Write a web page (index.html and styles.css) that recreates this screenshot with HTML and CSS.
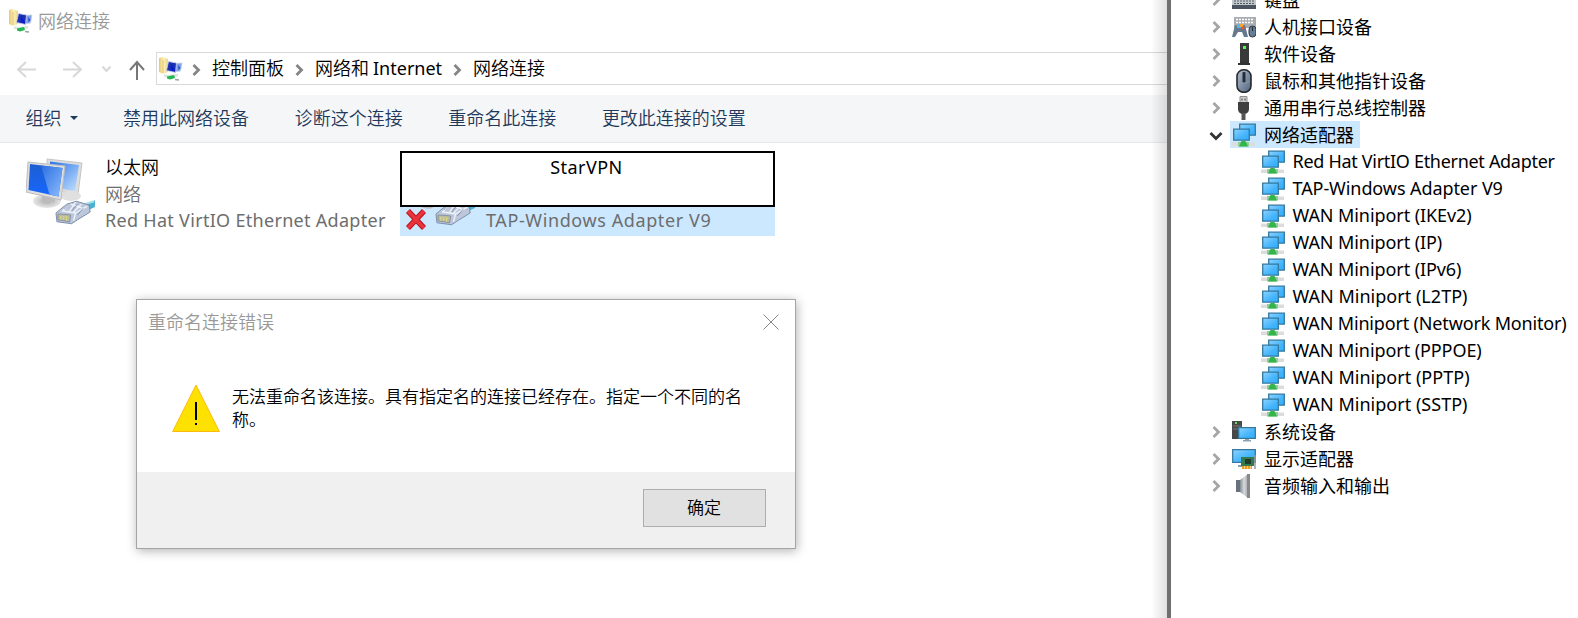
FILE: index.html
```
<!DOCTYPE html>
<html lang="zh-CN">
<head>
<meta charset="utf-8">
<title>网络连接</title>
<link rel="stylesheet" href="styles.css">
</head>
<body>
<svg class="defs" width="0" height="0">
  <defs>
    <linearGradient id="sky" x1="0" y1="0" x2="1" y2="1"><stop offset="0" stop-color="#8dd3ff"/><stop offset=".6" stop-color="#45b5fd"/><stop offset="1" stop-color="#2eaefc"/></linearGradient>
    <linearGradient id="screen" x1="0" y1="0" x2="0" y2="1"><stop offset="0" stop-color="#1d5fd0"/><stop offset="1" stop-color="#1766ff"/></linearGradient>
    <linearGradient id="glare" x1="0" y1="0" x2="1" y2="1"><stop offset="0" stop-color="#2a6fe0"/><stop offset="1" stop-color="#8ebcff"/></linearGradient>
    <linearGradient id="screenBack" x1="0" y1="0" x2="1" y2="1"><stop offset="0" stop-color="#2a72e6"/><stop offset="1" stop-color="#c5e2ff"/></linearGradient>
    <linearGradient id="folder" x1="0" y1="0" x2="1" y2="0"><stop offset="0" stop-color="#e3c671"/><stop offset=".5" stop-color="#fff2b8"/><stop offset="1" stop-color="#e8d491"/></linearGradient>
    <linearGradient id="metal" x1="0" y1="0" x2="1" y2="0"><stop offset="0" stop-color="#858c92"/><stop offset=".5" stop-color="#d6d9dc"/><stop offset="1" stop-color="#a7a9ac"/></linearGradient>
    <linearGradient id="mouse" x1="0" y1="0" x2="1" y2="1"><stop offset="0" stop-color="#b3bfce"/><stop offset="1" stop-color="#50647e"/></linearGradient>
    <radialGradient id="stand"><stop offset="0" stop-color="#aaa"/><stop offset="1" stop-color="#e7e7e7"/></radialGradient>
    <symbol id="net" viewBox="0 0 24 24">
      <path d="M0 19.500h23v3.500H0z" fill="#dcdcdc"/><path d="M6 19h11v4.500H6z" fill="#8fd096"/><path d="M9.500 18h4l2.500 5.500H7z" fill="#36b44c"/>
      <path d="M7.700 1.200h15.600v11H7.700z" fill="url(#sky)" stroke="#35789f" stroke-width="1.300"/>
      <path d="M1.700 6.200h15.600v11H1.700z" fill="url(#sky)" stroke="#35789f" stroke-width="1.300"/>
    </symbol>
    <symbol id="folderNet" viewBox="0 0 24 24">
      <path d="M0 1 4 0l5 2v13l-5 2-4-2z" fill="url(#folder)"/><path d="M4 3v13" stroke="#dcc177"/>
      <path d="m15 6.500 8-.5-1.500 8-6.500 1z" fill="#7f9ee6" stroke="#c3d0ee" stroke-width=".8"/>
      <path d="m9.500 4.500 8 1.500-1 9.500-9-2z" fill="#1a2fb4" stroke="#cfd6e8" stroke-width=".8"/><path d="m12 7 4.500 7h-4z" fill="#0c1ad0"/><path d="m19 8 2.500 3-2 2z" fill="#2b4bd2"/>
      <path d="m5 18.500 5 1 9-1.500" fill="none" stroke="#dbe4de" stroke-width="2.500"/><path d="m8 19.500 7-1.500 1 3-5 1.500-3-1z" fill="#22b950"/><path d="m16 22.500 4 .5" stroke="#98a39d" stroke-width="1.500"/>
    </symbol>
    <symbol id="plug" viewBox="0 0 42 26">
      <path d="m27 6 14-5v7l-9 4z" fill="#4eb0cf"/><path d="m30 5 10-3" stroke="#a9e2ef" stroke-width="2"/>
      <path d="m1 14 11-9 10-3 13 4 1 7-13 8-6 4-15-2z" fill="#bcc7db" stroke="#7c8ca8"/>
      <path d="m12 6-4 6 13 2 12-7M16 5l12 4M21 3l-6 9M27 5l-8 8M21 14l-2 8" fill="none" stroke="#eff4fb" stroke-width="1.400"/>
      <path d="m12 6-3 4m14-5-6 7m12-3-6 7" stroke="#7787a4" stroke-width=".8"/>
      <path d="m3 15 13 1-1 7-12-2z" fill="#b9bca0" stroke="#8690a0"/><path d="M6 17v4m3-4v4m3-4v5" stroke="#e3de78"/>
    </symbol>
    <symbol id="chev" viewBox="0 0 10 14"><path d="m1.500 2 5 5-5 5" fill="none" stroke="currentColor" stroke-width="2.800"/></symbol>
  </defs>
</svg>
<div class="desktop">
  <main class="window">
    <header class="titlebar"><svg class="i24"><use href="#folderNet"/></svg><span>网络连接</span></header>
    <nav class="navbar">
      <svg class="arrows" viewBox="0 0 156 33" fill="none">
        <g stroke="#d8d8d8" stroke-width="2"><path d="M36 17.500H18m8-7.500-8 7.500 8 7.500M63 17.500h18m-8-7.500 8 7.500-8 7.500"/><path d="m102.500 14.500 4 4.500 4-4.500"/></g>
        <path d="M137 28V10m-7 8 7-8 7 8" stroke="#777" stroke-width="2"/>
      </svg>
      <div class="address">
        <svg class="i24"><use href="#folderNet"/></svg>
        <svg class="sep"><use href="#chev"/></svg><span class="crumb">控制面板</span>
        <svg class="sep"><use href="#chev"/></svg><span class="crumb">网络和 <span class="lat">Internet</span></span>
        <svg class="sep"><use href="#chev"/></svg><span class="crumb">网络连接</span>
      </div>
    </nav>
    <div class="commands">
      <span class="organize">组织<i class="caret"></i></span><span>禁用此网络设备</span><span>诊断这个连接</span><span>重命名此连接</span><span>更改此连接的设置</span>
    </div>
    <section class="files">
      <article class="conn">
        <svg class="big" viewBox="0 0 72 72">
          <path d="m21 1 35 4-4 31-30-4z" fill="#ddd" stroke="#c5c5c5"/><path d="m24 3.500 29 3.500-4 26-24-4z" fill="url(#screenBack)"/>
          <ellipse cx="45" cy="38" rx="10" ry="5" fill="#e0e0e0"/>
          <ellipse cx="21" cy="43" rx="14" ry="7" fill="url(#stand)"/><path d="m16 34 11 2 2 8H16z" fill="#bbb"/>
          <path d="m2 4 37 4-4 34L0 34z" fill="#dedede" stroke="#bdbdbd"/><path d="m4 6 32.500 4-4 28.500L2.500 32z" fill="url(#screen)"/><path d="m15 7.500 21.500 2.500-4 28.500-9-2z" fill="url(#glare)"/>
          <use href="#plug" x="29" y="41" width="41" height="26"/>
        </svg>
        <div class="info"><span class="name">以太网</span><span>网络</span><span class="lat wide">Red Hat VirtIO Ethernet Adapter</span></div>
      </article>
      <article class="renaming">
        <div class="edit lat">StarVPN</div>
        <div class="selected">
          <svg class="status" viewBox="0 0 80 29">
            <path d="M21 0h13q-4 3-10 1z" fill="#bbb"/>
            <use href="#plug" x="35" y="-7" width="41" height="26"/>
            <path d="M8 4 24 21M24 4 8 21" stroke="#b9131e" stroke-width="5.500"/><path d="M8 4 24 21M24 4 8 21" stroke="#e9343c" stroke-width="3.500"/>
          </svg>
          <span class="lat wider">TAP-Windows Adapter V9</span>
        </div>
      </article>
    </section>
    <div class="dialog">
      <div class="dtitle"><span>重命名连接错误</span><svg class="close" viewBox="0 0 16 16"><path d="m.5.500 15 15m0-15-15 15" stroke="#888" fill="none"/></svg></div>
      <div class="dbody">
        <svg class="warn" viewBox="0 0 48 48"><path d="M24 1 47.300 47.500H.7z" fill="#fde100" stroke="#ffb90c"/><path d="M24 18v18m0 3v2" stroke="#000" stroke-width="2"/></svg>
        <p>无法重命名该连接。具有指定名的连接已经存在。指定一个不同的名称。</p>
      </div>
      <div class="dfoot"><button class="ok">确定</button></div>
    </div>
  </main>
  <aside class="devices">
    <ul class="tree">
      <li><svg class="tw"><use href="#chev"/></svg><svg class="i24" viewBox="0 0 24 24"><path d="M0 8h24v11H0z" fill="#c3c8cc"/><path d="M2 10h20M2 13h20M2 15.500h20" stroke="#545d66" stroke-dasharray="2 1"/><path d="M0 17h24v4H0z" fill="#49545e"/></svg><span>键盘</span></li>
      <li><svg class="tw"><use href="#chev"/></svg><svg class="i24" viewBox="0 0 24 24"><path d="M2 2h22v11H2z" fill="#a9aeb2"/><path d="M4 4.500h18M4 7.500h18" stroke="#fff" stroke-width="1.500" stroke-dasharray="2 1"/><path d="M3 10q5 2 10 0l3 12h-4l-2-5H6l-3 5H0z" fill="#65788d"/><path d="M5 9h4v4H5z" fill="#53b8ef"/><path d="M8 9h3v3H8z" fill="#f7a52b"/><circle cx="11" cy="13" r="1.500" fill="#ee5339"/><rect x="17" y="11" width="7" height="11" rx="3.500" fill="#657d98" stroke="#303942"/><path d="M20.500 12v4" stroke="#242b31"/></svg><span>人机接口设备</span></li>
      <li><svg class="tw"><use href="#chev"/></svg><svg class="i24" viewBox="0 0 24 24"><path d="M8 1h9v19H8z" fill="#393939"/><path d="M11 4h3v3h-3z" fill="#4bff45"/><path d="M8 20h9v1h1v2H6v-2h2z" fill="#333"/></svg><span>软件设备</span></li>
      <li><svg class="tw"><use href="#chev"/></svg><svg class="i24" viewBox="0 0 24 24"><rect x="5" y=".8" width="14" height="22.500" rx="6.500" fill="url(#mouse)" stroke="#25292d" stroke-width="1.600"/><rect x="10.500" y="3" width="3" height="11" rx="1" fill="#252e38"/><path d="M6.500 12q5.500 4 11 0" fill="none" stroke="#8999ad"/></svg><span>鼠标和其他指针设备</span></li>
      <li><svg class="tw"><use href="#chev"/></svg><svg class="i24" viewBox="0 0 24 24"><path d="M8 .5h7V7H8z" fill="#ccc" stroke="#8e8e8e"/><path d="M9.500 2.500h1v2h-1zm3 0h1v2h-1z" fill="#444"/><path d="M6 6h11v7q0 4-4 5H10q-4-1-4-5z" fill="#404040"/><path d="M9.500 17h4v7h-4z" fill="#555"/></svg><span>通用串行总线控制器</span></li>
      <li class="open"><svg class="down" viewBox="0 0 14 10"><path d="m1.500 2 5.500 5.500L12.500 2" fill="none" stroke="#333" stroke-width="2.800"/></svg><div class="hl"><svg class="i24"><use href="#net"/></svg><span>网络适配器</span></div></li>
      <li class="child tight"><svg class="i24"><use href="#net"/></svg><span>Red Hat VirtIO Ethernet Adapter</span></li>
      <li class="child"><svg class="i24"><use href="#net"/></svg><span>TAP-Windows Adapter V9</span></li>
      <li class="child"><svg class="i24"><use href="#net"/></svg><span>WAN Miniport (IKEv2)</span></li>
      <li class="child"><svg class="i24"><use href="#net"/></svg><span>WAN Miniport (IP)</span></li>
      <li class="child"><svg class="i24"><use href="#net"/></svg><span>WAN Miniport (IPv6)</span></li>
      <li class="child loose"><svg class="i24"><use href="#net"/></svg><span>WAN Miniport (L2TP)</span></li>
      <li class="child medium"><svg class="i24"><use href="#net"/></svg><span>WAN Miniport (Network Monitor)</span></li>
      <li class="child"><svg class="i24"><use href="#net"/></svg><span>WAN Miniport (PPPOE)</span></li>
      <li class="child loose"><svg class="i24"><use href="#net"/></svg><span>WAN Miniport (PPTP)</span></li>
      <li class="child loose"><svg class="i24"><use href="#net"/></svg><span>WAN Miniport (SSTP)</span></li>
      <li><svg class="tw"><use href="#chev"/></svg><svg class="i24" viewBox="0 0 24 24"><path d="M0 1h10v18H0z" fill="#484848"/><path d="M1 6h8M1 9h8" stroke="#777"/><path d="M3 2h2v2H3z" fill="#5ee35a"/><path d="M6.700 7.700h16.600v10.600H6.700z" fill="url(#sky)" stroke="#35789f" stroke-width="1.300"/><path d="M13 19h4v1h2v1.500h-8V20h2z" fill="#8ba1b1"/></svg><span>系统设备</span></li>
      <li><svg class="tw"><use href="#chev"/></svg><svg class="i24" viewBox="0 0 24 24"><path d="M.7 2.700h22.600v12.600H.7z" fill="url(#sky)" stroke="#35789f" stroke-width="1.300"/><path d="M6 19h6" stroke="#8ba1b1" stroke-width="2"/><path d="M9 10h13v9H9z" fill="#347a4f"/><path d="M13 12h6v5h-6z" fill="#213b2e"/><path d="M10 20.500h10" stroke="#ef9c1b" stroke-width="3" stroke-dasharray="2.500 .5"/><path d="M23 8v14" stroke="#999" stroke-width="1.500"/></svg><span>显示适配器</span></li>
      <li><svg class="tw"><use href="#chev"/></svg><svg class="i24" viewBox="0 0 24 24"><path d="M4 6h6v12H4z" fill="#68727c"/><path d="M8 6 16 0v24l-8-6z" fill="url(#metal)"/><path d="M15 0h3v24h-3z" fill="#888"/></svg><span>音频输入和输出</span></li>
    </ul>
  </aside>
</div>
</body>
</html>
```
FILE: styles.css
```
* { box-sizing: border-box; }
body { margin: 0; overflow: hidden; background: #fff; color: #000; font: 350 18px/27px "Noto Sans", "Noto Sans CJK SC", sans-serif; }
span, p, button { font-family: "Noto Sans CJK SC", sans-serif; white-space: nowrap; }
svg { display: block; flex: none; }
.defs { position: absolute; }
.i24 { width: 24px; height: 24px; }
.desktop { display: flex; width: 1578px; height: 618px; overflow: hidden; }
.window { position: relative; width: 1167px; height: 618px; flex: none; }
.window::after { content: ""; position: absolute; top: 0; right: 0; width: 16px; height: 618px; background: linear-gradient(90deg, rgba(0,0,0,0), rgba(0,0,0,.12)); }
.titlebar { display: flex; align-items: center; height: 52px; padding: 0 0 10px 9px; gap: 5px; color: #999; }
.titlebar span { padding-bottom: 2px; }
.navbar { display: flex; height: 33px; }
.arrows { width: 156px; height: 33px; }
.address { display: flex; flex: 1; align-items: center; border: 1px solid #d9d9d9; border-right: 0; padding-left: 2px; }
.sep { width: 10px; height: 14px; color: #858585; margin: 2px 10px 0 9px; }
.crumb { margin-right: 2px; padding-bottom: 2px; }
.address span.lat, .address .crumb .lat { font-family: "Noto Sans", sans-serif; font-weight: 400; }
.lat, span.lat { font-family: "Noto Sans", sans-serif; font-weight: 400; }
.wide { letter-spacing: .3px; }
.wider { letter-spacing: .6px; }
.commands { display: flex; align-items: center; gap: 45.600px; height: 48px; margin-top: 10px; padding: 0 0 2px 25.500px; background: #f5f6f7; border-bottom: 1px solid #e5e7e9; color: #1e395b; }
.organize { display: flex; align-items: center; gap: 8px; }
.caret { border: 4px solid transparent; border-top-color: #1e395b; border-bottom: 0; }
.files { display: flex; padding-top: 8px; }
.conn { display: flex; width: 400px; padding-left: 26px; }
.big { width: 72px; height: 72px; margin-top: 7px; }
.info { display: flex; flex-direction: column; padding: 2px 0 0 7px; color: #6d6d6d; line-height: 26.500px; }
.info .name { color: #000; }
.info .wide { padding-top: 1px; }
.renaming { width: 375px; }
.edit { height: 56px; border: 2px solid #000; background: #fff; text-align: center; padding: 1px 2px 0 0; line-height: 27px; letter-spacing: .45px; }
.selected { display: flex; height: 29px; background: #cce8ff; color: #6d6d6d; }
.status { width: 80px; height: 29px; }
.selected span { padding-left: 6px; }
.dialog { position: absolute; left: 136px; top: 299px; display: flex; flex-direction: column; width: 660px; height: 250px; border: 1px solid #a5a5a5; background: #fff; box-shadow: 1px 2px 10px rgba(0,0,0,.3); }
.dtitle { display: flex; justify-content: space-between; height: 84px; padding: 8px 16px 0 11px; color: #999; }
.close { width: 16px; height: 16px; margin-top: 6px; }
.dbody { display: flex; height: 88px; padding-left: 35px; }
.warn { width: 48px; height: 48px; }
.dbody p { width: 515px; margin: 0 0 0 12px; font-size: 17px; line-height: 23px; white-space: normal; }
.dfoot { display: flex; flex: 1; justify-content: flex-end; align-items: flex-start; padding: 17px 29px 0 0; background: #f0f0f0; }
.ok { width: 123px; height: 38px; padding: 0 1px 3px 0; border: 1px solid #adadad; background: #e1e1e1; color: #000; font-size: 17px; font-weight: 350; }
.devices { flex: 1; overflow: hidden; border-left: 4px solid #6f6f6f; background: #fff; }
.tree { margin: -14px 0 0; padding: 0; list-style: none; }
.tree li { display: flex; align-items: center; height: 27px; padding-left: 41px; }
.tree li > span, .hl > span { margin-left: 8px; font-weight: 400; }
.tw { width: 10px; height: 14px; color: #a5a5a5; margin-right: 10px; }
.tree .open { padding-left: 38px; }
.down { width: 14px; height: 10px; margin: 2px 7px 0 0; }
.hl { display: flex; align-items: center; height: 27px; padding: 0 6px 0 2px; background: #cce8ff; }
.tree .child { padding-left: 90px; }
.tree .child > span { font-family: "Noto Sans", sans-serif; margin-left: 7.500px; letter-spacing: -.08px; }
.tree .tight > span { letter-spacing: -.3px; }
.tree .medium > span { letter-spacing: -.16px; }
.tree .loose > span { letter-spacing: .02px; }
```
